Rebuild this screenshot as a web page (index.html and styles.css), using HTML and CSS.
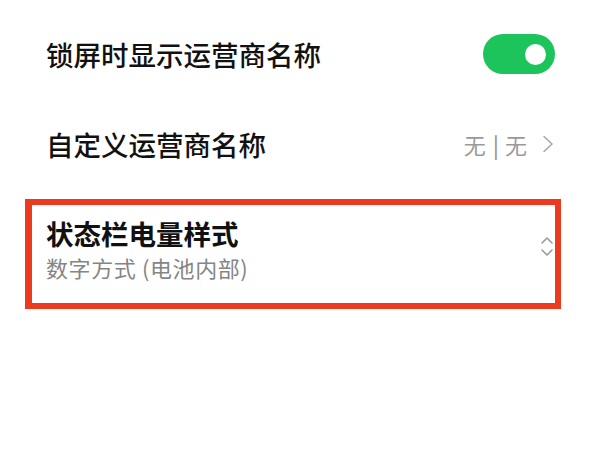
FILE: index.html
```html
<!DOCTYPE html>
<html lang="zh-CN">
<head>
<meta charset="utf-8">
<link rel="stylesheet" href="styles.css">
</head>
<body>
<main class="settings">
  <div class="row">
    <span class="title">锁屏时显示运营商名称</span>
    <span class="toggle"><span class="knob"></span></span>
  </div>
  <div class="row">
    <span class="title">自定义运营商名称</span>
    <span class="value"><span>无<span class="sep">|</span>无</span>
      <svg class="arrow" width="12" height="18" viewBox="0 0 12 18"><polyline points="2,1.5 10,9 2,16.5" fill="none" stroke="#a8a8a8" stroke-width="1.6" stroke-linecap="round" stroke-linejoin="round"/></svg>
    </span>
  </div>
  <div class="highlight">
    <div class="text">
      <div class="strong">状态栏电量样式</div>
      <div class="sub">数字方式 (电池内部)</div>
    </div>
    <svg class="updown" width="12" height="21" viewBox="0 0 12 21"><polyline points="1,7 6,2 11,7" fill="none" stroke="#9a9a9a" stroke-width="1.6" stroke-linecap="round" stroke-linejoin="round"/><polyline points="1,14 6,19 11,14" fill="none" stroke="#9a9a9a" stroke-width="1.6" stroke-linecap="round" stroke-linejoin="round"/></svg>
  </div>
</main>
</body>
</html>
```
FILE: styles.css
```css
html, body {
  margin: 0;
  padding: 0;
  background: #ffffff;
}
body {
  width: 600px;
  height: 450px;
  overflow: hidden;
  font-family: "Noto Sans CJK SC", "Noto Sans", sans-serif;
  color: #111111;
}
.settings {
  padding-top: 9px;
  display: flex;
  flex-direction: column;
}
.row {
  height: 90px;
  display: flex;
  align-items: center;
  justify-content: space-between;
  padding: 0 45px 0 46px;
}
.title {
  font-size: 27.5px;
  font-weight: 500;
  line-height: 36px;
}
.toggle {
  width: 72px;
  height: 40px;
  border-radius: 20px;
  background: #1dc35b;
  display: flex;
  align-items: center;
  justify-content: flex-end;
  padding-right: 9px;
  box-sizing: border-box;
}
.knob {
  width: 21px;
  height: 21px;
  border-radius: 50%;
  background: #ffffff;
}
.value {
  display: flex;
  align-items: center;
  gap: 15px;
  font-size: 22px;
  color: #9a9a9a;
  line-height: 30px;
  margin-right: 1px;
}
.sep {
  margin: 0 6px 0 7px;
  font-weight: 500;
}
.arrow {
  display: block;
}
.highlight {
  margin: 10px 0 0 25px;
  width: 536px;
  height: 110px;
  box-sizing: border-box;
  border: 6px solid #ec3a1e;
  border-left-width: 7px;
  display: flex;
  align-items: flex-start;
  justify-content: space-between;
  padding: 10px 2px 0 14px;
}
.strong {
  font-size: 27.5px;
  font-weight: 700;
  line-height: 36px;
}
.sub {
  font-size: 22px;
  color: #858585;
  line-height: 32px;
  letter-spacing: 0.6px;
}
.updown {
  display: block;
  margin-top: 21px;
}
```
